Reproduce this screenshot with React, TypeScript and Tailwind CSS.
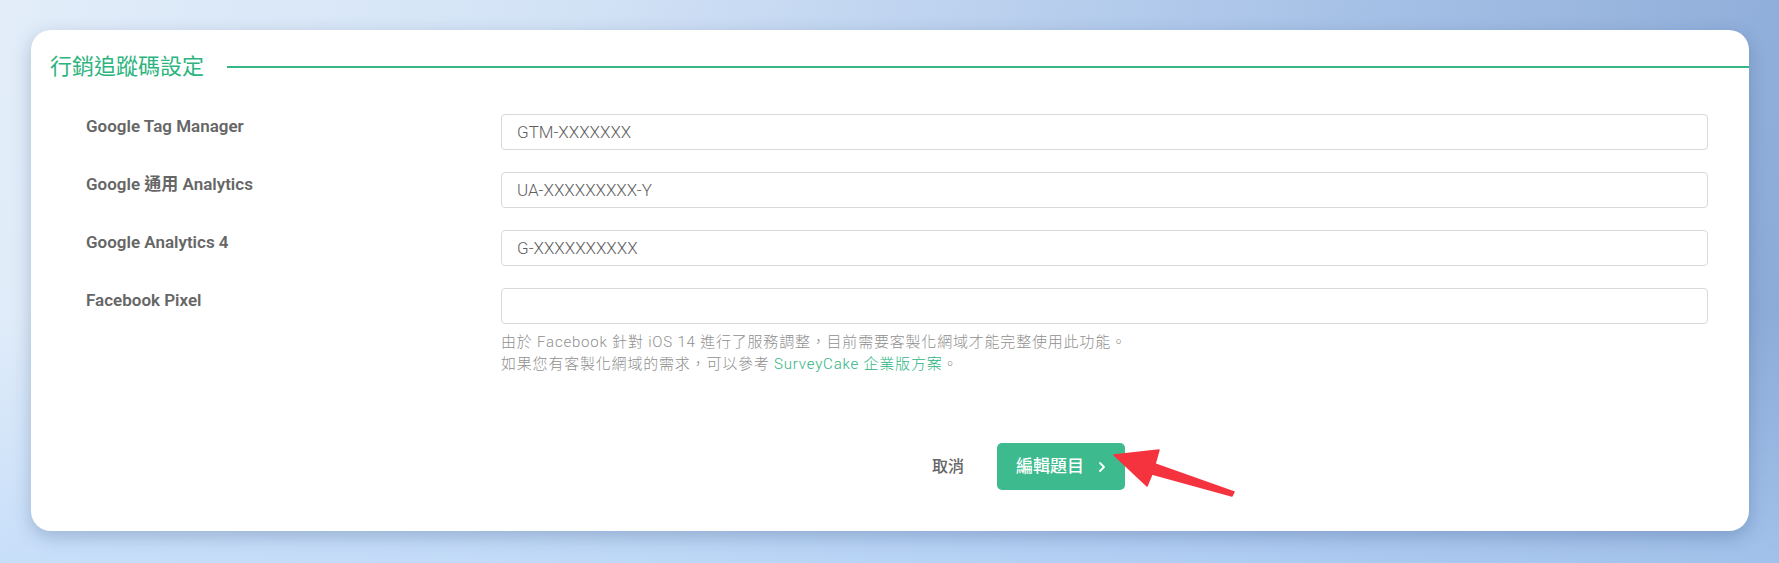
import React from "react";

const fontStack =
  "Roboto, 'Noto Sans CJK TC', 'Noto Sans', sans-serif";

type Field = { label: string; placeholder: string };

const fields: Field[] = [
  { label: "Google Tag Manager", placeholder: "GTM-XXXXXXX" },
  { label: "Google 通用 Analytics", placeholder: "UA-XXXXXXXXX-Y" },
  { label: "Google Analytics 4", placeholder: "G-XXXXXXXXXX" },
  { label: "Facebook Pixel", placeholder: "" },
];

function PointerArrow() {
  // red callout arrow pointing at the primary button
  return (
    <svg
      className="pointer-events-none absolute left-0 top-0"
      width="1779"
      height="563"
      viewBox="0 0 1779 563"
    >
      <polygon
        points="1114,455 1159,450 1155,464 1234,492 1232,496 1152,474 1147,486"
        fill="#f5333f"
        stroke="#f5333f"
        strokeWidth="1.5"
        strokeLinejoin="round"
      />
    </svg>
  );
}

export default function App() {
  return (
    <div
      className="relative h-[563px] w-[1779px] overflow-hidden bg-[linear-gradient(100deg,#e2edf9_0%,#d3e3f6_30%,#aec7ea_65%,#8aaad7_100%)] pl-[31px] pt-[30px]"
      style={{ fontFamily: fontStack }}
    >
      <div className="pointer-events-none absolute inset-0 bg-[linear-gradient(180deg,rgba(255,255,255,0)_55%,rgba(180,212,250,0.55)_100%)]" />
      <div className="relative flex h-[501px] w-[1718px] flex-col rounded-[20px] bg-white shadow-[0_6px_18px_rgba(40,70,120,0.28)]">
        {/* section heading with rule */}
        <div className="mt-[22px] flex items-center pl-[19px]">
          <h2 className="text-[22px] leading-[30px] font-normal text-[#2db47e]">
            行銷追蹤碼設定
          </h2>
          <div className="ml-[23px] h-[2px] flex-1 bg-[#35b785]" />
        </div>

        {/* form rows */}
        <div className="mt-[32px] flex flex-col gap-[22px] pl-[55px] pr-[41px]">
          {fields.map((f, i) => (
            <div key={f.label} className="flex items-start">
              <label className="w-[415px] shrink-0 text-[17px] leading-[24px] font-semibold text-[#666666]">
                {f.label}
              </label>
              <div className="flex-1">
                <input
                  type="text"
                  placeholder={f.placeholder}
                  className="h-[36px] w-full rounded-[4px] border border-[#d9d9d9] bg-white pl-[15px] text-[17px] font-light text-[#555] outline-none placeholder:text-[#5f5f5f]"
                />
                {i === fields.length - 1 && (
                  <div className="mt-[7px] text-[15px] leading-[22px] font-light tracking-[0.8px] text-[#8f8f8f]">
                    <p>
                      由於 Facebook 針對 iOS 14 進行了服務調整，目前需要客製化網域才能完整使用此功能。
                    </p>
                    <p>
                      如果您有客製化網域的需求，可以參考{" "}
                      <a className="text-[#2db47e]">SurveyCake 企業版方案</a>。
                    </p>
                  </div>
                )}
              </div>
            </div>
          ))}
        </div>

        {/* actions */}
        <div className="mt-auto mb-[41px] flex items-center pl-[901px]">
          <button className="text-[16px] font-medium text-[#666666]">取消</button>
          <button className="ml-[33px] flex h-[47px] w-[128px] items-center justify-center gap-[14px] rounded-[5px] bg-[#3dba8e] text-[17px] font-medium text-white">
            <span>編輯題目</span>
            <svg width="8" height="12" viewBox="0 0 8 12" fill="none">
              <path
                d="M2 2l4 4-4 4"
                stroke="white"
                strokeWidth="1.8"
                strokeLinecap="round"
                strokeLinejoin="round"
              />
            </svg>
          </button>
        </div>
      </div>
      <PointerArrow />
    </div>
  );
}
